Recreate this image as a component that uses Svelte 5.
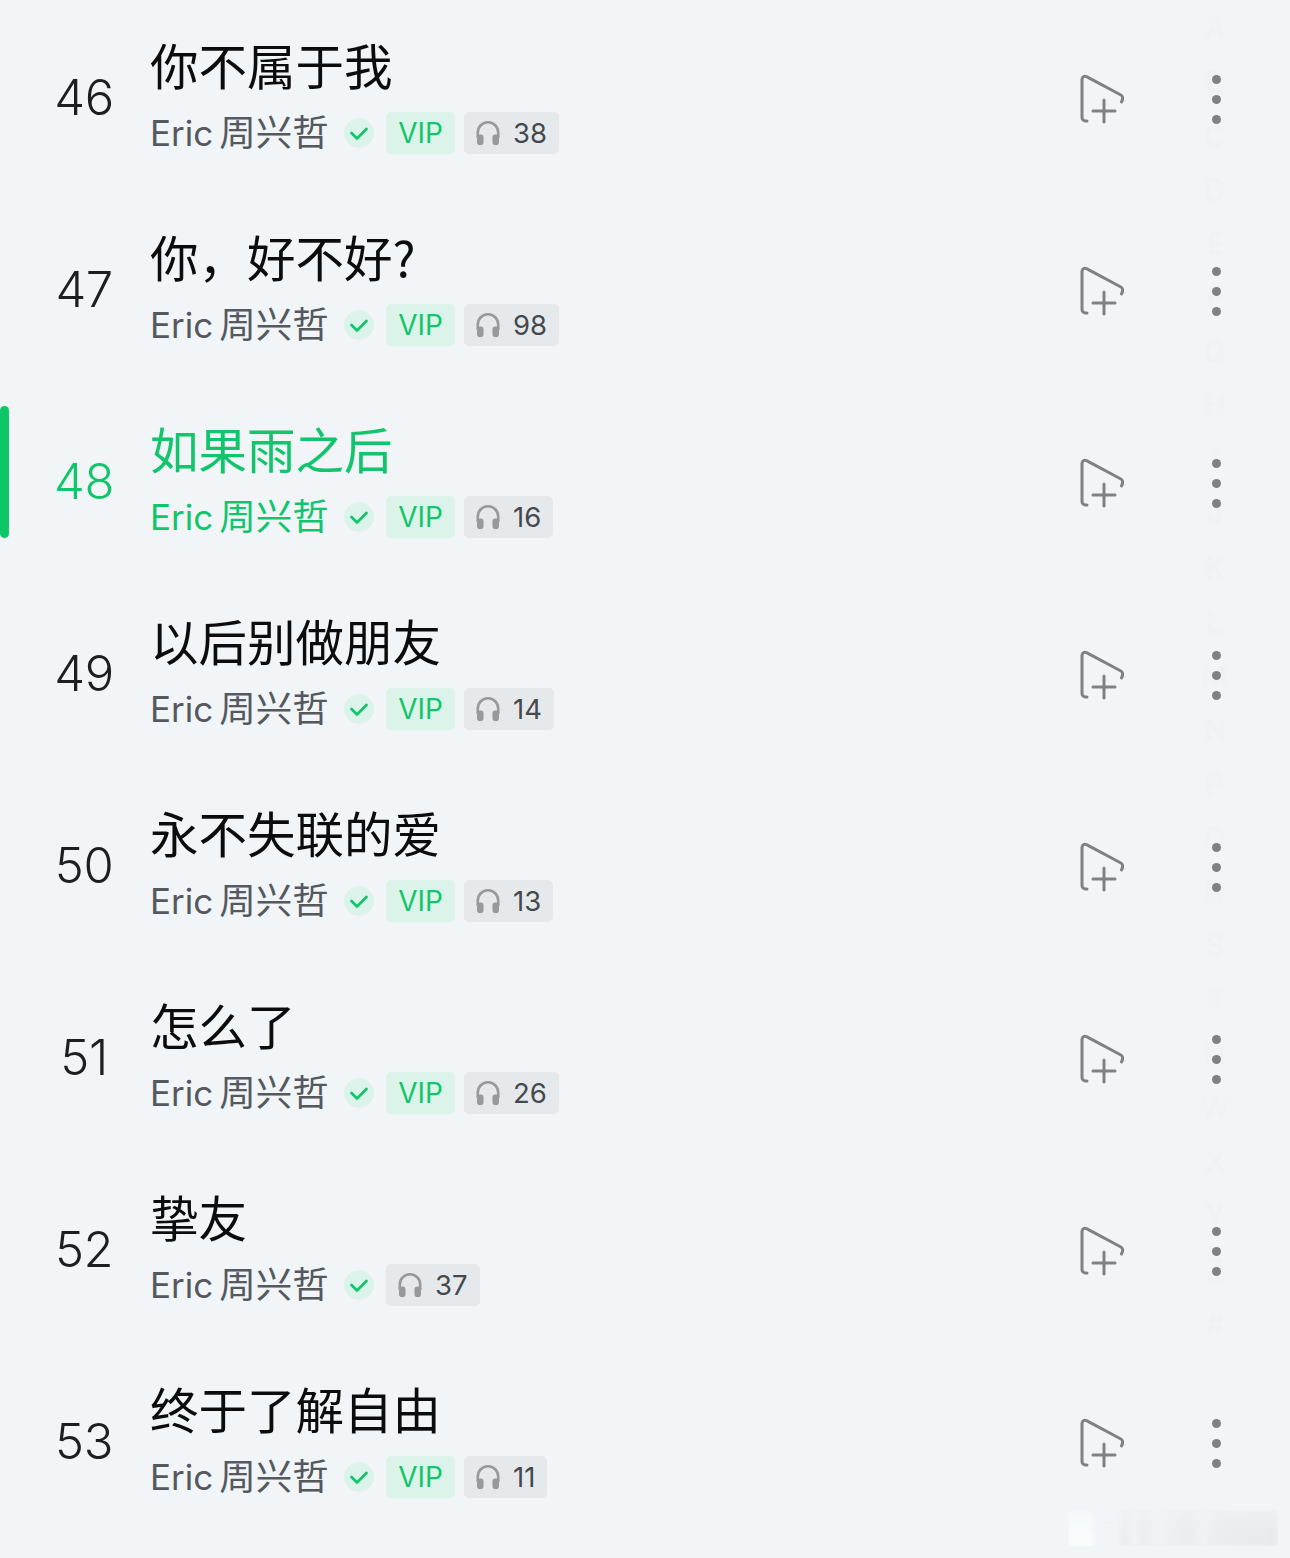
<script>
	const songs = [
		{ no: 46, title: '你不属于我', vip: true, plays: 38 },
		{ no: 47, title: '你，好不好?', vip: true, plays: 98 },
		{ no: 48, title: '如果雨之后', vip: true, plays: 16, active: true },
		{ no: 49, title: '以后别做朋友', vip: true, plays: 14 },
		{ no: 50, title: '永不失联的爱', vip: true, plays: 13 },
		{ no: 51, title: '怎么了', vip: true, plays: 26 },
		{ no: 52, title: '挚友', vip: false, plays: 37 },
		{ no: 53, title: '终于了解自由', vip: true, plays: 11 }
	];
	const letters = 'ABCDEFGHIJKLMNPQRSTUWXYZ#'.split('');
</script>

<div class="page">
	<div class="index" aria-hidden="true">
		{#each letters as l}<span>{l}</span>{/each}
	</div>

	<ul class="list">
		{#each songs as song}
			<li class="row" class:active={song.active}>
				{#if song.active}<span class="marker"></span>{/if}
				<span class="no">{song.no}</span>
				<div class="info">
					<div class="title">{song.title}</div>
					<div class="meta">
						<span class="artist"><span class="latin">Eric</span>周兴哲</span>
						<span class="verified">
							<svg width="20" height="15" viewBox="0 0 20 15" fill="none" aria-hidden="true">
								<path d="M2.500 7l5.500 5.500L17.500 3" stroke="#12c56c" stroke-width="2.800" stroke-linecap="round" stroke-linejoin="round" />
							</svg>
						</span>
						{#if song.vip}<span class="vip">VIP</span>{/if}
						<span class="plays">
							<svg width="26" height="26" viewBox="0 0 26 26" fill="none" aria-hidden="true">
								<path d="M2.800 18v-5.500a10.200 10.200 0 0 1 20.400 0V18" stroke="#97999c" stroke-width="2.600" />
								<rect x="2" y="14.500" width="6.500" height="10.500" rx="2.800" fill="#97999c" />
								<rect x="17.500" y="14.500" width="6.500" height="10.500" rx="2.800" fill="#97999c" />
							</svg>
							{song.plays}
						</span>
					</div>
				</div>
				<div class="actions">
					<svg class="add" width="48" height="50" viewBox="0 0 48 50" fill="none" aria-hidden="true">
						<path d="M9 47H7.500A3.500 3.500 0 0 1 4 43.500V5.500C4 2.500 6.500 1.500 9 2.800L42 20.500C45 22 45.500 24 43.500 28" stroke="#7e8287" stroke-width="3" stroke-linecap="round" />
						<path d="M15 37h22M26 26v22" stroke="#7e8287" stroke-width="3" stroke-linecap="round" />
					</svg>
					<div class="more">
						<span></span><span></span><span></span>
					</div>
				</div>
			</li>
		{/each}
	</ul>

	<div class="toast" aria-hidden="true"></div>
</div>

<style>
	:global(body) {
		margin: 0;
		background: #f1f5f8;
	}
	.page {
		position: relative;
		width: 1290px;
		height: 1558px;
		overflow: hidden;
		background: #f1f5f8;
		font-family: Inter, 'Noto Sans CJK SC', sans-serif;
	}
	.list {
		position: relative;
		list-style: none;
		margin: 0;
		padding: 4px 0 0;
	}
	.row {
		position: relative;
		display: flex;
		align-items: center;
		height: 192px;
		color: #000;
	}
	.marker {
		position: absolute;
		left: 0;
		top: 18px;
		width: 9px;
		height: 132px;
		border-radius: 5px;
		background: #0cc765;
	}
	.no {
		width: 168px;
		margin-right: -18px;
		flex: none;
		text-align: center;
		font-size: 49px;
		font-weight: 300;
		letter-spacing: -0.5px;
		color: #1c1f22;
		margin-top: -6px;
	}
	.info {
		flex: 1;
		margin-top: -14px;
	}
	.title {
		height: 64px;
		line-height: 64px;
		font-size: 48.5px;
		font-family: 'Noto Sans CJK SC', sans-serif;
		font-weight: 400;
		color: #0c0c0c;
	}
	.meta {
		display: flex;
		align-items: center;
		height: 42px;
		margin-top: 16px;
		padding-left: 1px;
	}
	.artist {
		font-size: 36.5px;
		color: #55595e;
		line-height: 38px;
		height: 42px;
		width: 194px;
		white-space: nowrap;
		font-family: 'Noto Sans CJK SC', sans-serif;
		margin-left: -1px;
	}
	.latin {
		font-family: Inter, sans-serif;
		font-size: 35px;
		margin-right: 6px;
	}
	.verified {
		display: flex;
		align-items: center;
		justify-content: center;
		width: 30px;
		height: 30px;
		border-radius: 50%;
		background: #dcf3e9;
		margin-right: 12px;
	}
	.vip {
		display: flex;
		align-items: center;
		justify-content: center;
		width: 69px;
		height: 42px;
		border-radius: 5px;
		background: #dcf3e9;
		color: #12c56c;
		font-size: 28px;
		margin-right: 9px;
	}
	.plays {
		display: flex;
		align-items: center;
		gap: 12px;
		height: 42px;
		padding: 0 12px 0 11px;
		border-radius: 5px;
		background: #e6e9ec;
		color: #45494e;
		font-size: 27.5px;
	}
	.actions {
		display: flex;
		align-items: center;
		gap: 86px;
		margin-right: 69px;
		margin-top: -2px;
	}
	.add {
		display: block;
	}
	.more {
		display: flex;
		flex-direction: column;
		gap: 11px;
	}
	.more span {
		width: 9px;
		height: 9px;
		border-radius: 50%;
		background: #7e8287;
	}
	.row.active .no,
	.row.active .title,
	.row.active .artist {
		color: #12c56c;
	}
	.index {
		position: absolute;
		top: 1px;
		left: 1190px;
		width: 50px;
		display: flex;
		flex-direction: column;
		align-items: center;
		color: #edf1f4;
		font-size: 28px;
		line-height: 54px;
		filter: blur(1px);
	}
	.toast {
		position: absolute;
		left: 1068px;
		top: 1510px;
		width: 210px;
		height: 36px;
		background: linear-gradient(90deg, #fcfdfd 0 22px, #f1f4f7 28px, #f1f4f7 50px, #e8ebee 56px, #f0f3f6 66px, #e9ecef 76px, #f0f3f6 88px, #e7eaed 120px, #eff2f5 135px, #e8ebee 150px, #e5e8eb 100%);
		filter: blur(2px);
		mask-image: linear-gradient(180deg, rgba(0, 0, 0, 0.4), #000);
	}
</style>
